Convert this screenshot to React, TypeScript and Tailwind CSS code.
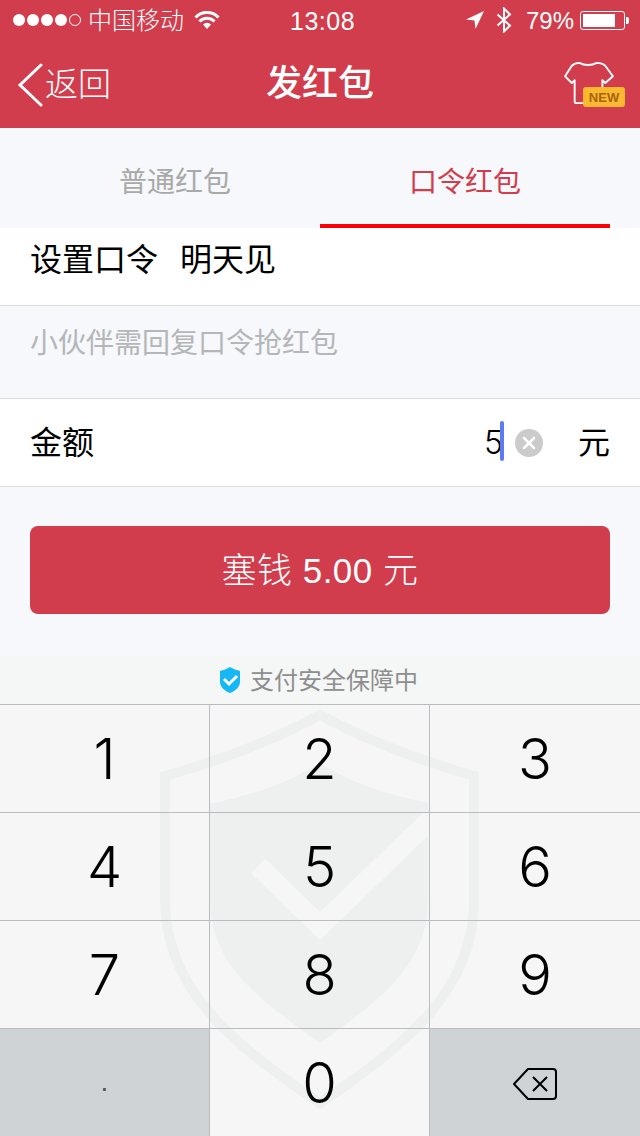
import { X } from "lucide-react";

const FONT = "font-['Liberation_Sans','Noto_Sans_CJK_SC',sans-serif]";
const DIGIT = "font-['Inter',sans-serif] font-[350]";

const StatusBar = () => (
  <div className="h-10 flex items-center pl-[13px] pr-[11px] text-white text-[24px] relative">
    <div className="flex items-center gap-[2px]">
      {[0, 1, 2, 3].map((i) => <span key={i} className="w-3 h-3 rounded-full bg-white" />)}
      <span className="w-3 h-3 rounded-full border border-white" />
    </div>
    <span className="ml-[7px] font-light mt-[2px]">中国移动</span>
    <svg className="ml-[10px]" width="26" height="20" viewBox="0 0 26 20" fill="none" stroke="white" strokeWidth="3">
      <path d="M1.500 7.500a16 16 0 0 1 23 0" />
      <path d="M5.500 11.500a10.500 10.500 0 0 1 15 0" />
      <path d="M13 19l-4-4.500a5.500 5.500 0 0 1 8 0z" fill="white" stroke="none" />
    </svg>
    <span className="absolute left-[290px] top-[3px] text-[25px] font-medium tracking-[0.5px]">13:08</span>
    <div className="ml-auto flex items-center">
      <svg width="18" height="18" viewBox="0 0 18 18" fill="white"><path d="M18 0L0 8.500l8.500 1 1 8.500z" /></svg>
      <svg className="ml-[12px]" width="16" height="26" viewBox="0 0 16 26" fill="none" stroke="white" strokeWidth="2">
        <path d="M1.500 7.500L14 18.500 8 24.500V1.500l6 6L1.500 18.500" />
      </svg>
      <span className="ml-[14px] mt-[1px] font-light">79%</span>
      <div className="ml-[6px] w-[45px] h-[19px] border border-white rounded-[3px] p-[2px]">
        <div className="h-full w-[32px] bg-white" />
      </div>
      <div className="ml-[1px] w-[3px] h-[7px] bg-white rounded-r-[2px]" />
    </div>
  </div>
);

const NavBar = () => (
  <div className="h-[88px] flex items-center relative text-white">
    <svg className="ml-[17px] mt-[1px]" width="26" height="44" viewBox="0 0 26 44" fill="none" stroke="white" strokeWidth="3" strokeLinecap="round">
      <path d="M24 2L3 22l21 20" />
    </svg>
    <span className="ml-[2px] mt-[2px] text-[33px] font-light">返回</span>
    <span className="absolute left-0 right-0 text-center text-[36px] font-medium">发红包</span>
    <div className="ml-auto mr-[15px] relative w-[62px] h-[46px]">
      <svg className="absolute left-0 top-0" width="52" height="44" viewBox="0 0 52 46" fill="none" stroke="white" strokeWidth="2" strokeLinejoin="round">
        <path d="M16 2c5 3 13 3 18 0 3 0 7 1 9 3l8 11-8 7-3-3v23a1 1 0 0 1-1 1H13a2 2 0 0 1-2-2V20l-3 3-7-7L8 5c2-2 5-3 8-3z" />
      </svg>
      <div className="absolute right-0 bottom-0 w-[42px] h-[20px] bg-[#fbb92f] rounded-[3px] flex items-center justify-center text-[#a8640c] text-[13px] font-bold leading-none">NEW</div>
    </div>
  </div>
);

const Tabs = () => (
  <div className="h-[100px] flex bg-[#f6f8fb] pr-[30px] text-[28px]">
    <div className="w-[320px] pl-[30px] pt-[10px] flex items-center justify-center text-[#a9a9a9]">普通红包</div>
    <div className="flex-1 flex items-center justify-center text-[#d13d4c] border-b-4 border-[#fb0006] pt-[14px]">口令红包</div>
  </div>
);

const Form = () => (
  <div className="bg-[#f6f8fb] h-[428px] flex flex-col">
    <div className="h-[78px] bg-white border-b border-[#dcdde0] flex items-start pl-[30px] text-[32px] text-black pt-[8px] leading-[48px]">
      <span>设置口令</span>
      <span className="ml-[22px]">明天见</span>
    </div>
    <div className="h-[92px] pl-[30px] pt-[14px] text-[28px] leading-[48px] text-[#b4b6b8]">小伙伴需回复口令抢红包</div>
    <div className="h-[89px] bg-white border-y border-[#dcdde0] flex items-center pl-[30px] pr-[30px] text-[32px] text-black">
      <span>金额</span>
      <span className={`ml-auto ${DIGIT}`}>5</span>
      <span className="w-[4px] h-[40px] bg-[#5b7cf0] rounded-[2px] -ml-[3px] -mt-[3px]" />
      <span className="ml-[11px] w-[28px] h-[28px] rounded-full bg-[#cbcbcb] flex items-center justify-center">
        <X size={20} color="white" strokeWidth={3} />
      </span>
      <span className="ml-[35px]">元</span>
    </div>
    <button className="mx-[30px] mt-[39px] h-[88px] pt-[2px] rounded-[8px] bg-[#d13d4c] text-white text-[35px] font-light tracking-[0.5px]">塞钱 5.00 元</button>
  </div>
);

const Watermark = () => (
  <svg className="absolute left-0 top-0 pointer-events-none" width="640" height="432" viewBox="0 704 640 432" fill="none">
    <path d="M320 715C270 742 215 762 165 776V900C165 985 225 1040 320 1103C415 1040 474 985 474 900V776C425 762 370 742 320 715Z" stroke="#eeefef" strokeWidth="10" />
    <path d="M320 763C285 785 250 795 210 804V900C210 965 260 1000 320 1043C380 1000 428 965 428 900V803C390 795 355 785 320 763Z" fill="#eeefef" />
    <path d="M258 866L320 926L432 818" stroke="#f6f6f6" strokeWidth="20" />
  </svg>
);

const Keypad = () => {
  const keys = ["1", "2", "3", "4", "5", "6", "7", "8", "9"];
  const cellBorder = ["border-r", "border-r", ""];
  const widths = ["w-[210px]", "w-[220px]", "flex-1"];
  const rows = [keys.slice(0, 3), keys.slice(3, 6), keys.slice(6, 9)];
  return (
    <div className="relative flex-1 flex flex-col bg-[#f6f6f6]">
      <Watermark />
      {rows.map((row, r) => (
        <div key={r} className="h-[108px] flex relative">
          {row.map((k, c) => (
            <div key={k} className={`${widths[c]} ${cellBorder[c]} ${DIGIT} border-t border-[#b9bcc0] flex items-center justify-center text-[56px] text-black`}>{k}</div>
          ))}
        </div>
      ))}
      <div className="flex-1 flex relative">
        <div className="w-[210px] border-r border-t border-[#b9bcc0] bg-[#d0d3d6] flex items-center justify-center text-[28px] text-[#555] pb-[2px]">.</div>
        <div className={`w-[220px] border-r border-t border-[#b9bcc0] flex items-center justify-center text-[56px] text-black ${DIGIT}`}>0</div>
        <div className="flex-1 border-t border-[#b9bcc0] bg-[#d0d3d6] flex items-center justify-center pt-[2px]">
          <svg width="46" height="34" viewBox="0 0 46 34" fill="none" stroke="black" strokeWidth="2">
            <path d="M16 2h25a3 3 0 0 1 3 3v24a3 3 0 0 1-3 3H16L2 17z" strokeLinejoin="round" />
            <path d="M21 10l14 14M35 10L21 24" />
          </svg>
        </div>
      </div>
    </div>
  );
};

const SafeBar = () => (
  <div className="h-[48px] bg-[#f5f6f6] flex items-center justify-center text-[24px] text-[#8e8e8e] gap-[9px] pr-[3px]">
    <svg width="22" height="28" viewBox="0 0 22 28">
      <path d="M11 1C8 3 4 4 1 5v11c0 5 5 9 10 11 5-2 10-6 10-11V5c-3-1-7-2-10-4z" fill="#15b7f5" />
      <path d="M5 13l5 5 8-8" fill="none" stroke="white" strokeWidth="3" />
    </svg>
    <span className="mt-[1px]">支付安全保障中</span>
  </div>
);

export default function App() {
  return (
    <div className={`w-[640px] h-[1136px] flex flex-col overflow-hidden ${FONT}`}>
      <div className="bg-[#d13d4c]">
        <StatusBar />
        <NavBar />
      </div>
      <Tabs />
      <Form />
      <SafeBar />
      <Keypad />
    </div>
  );
}
